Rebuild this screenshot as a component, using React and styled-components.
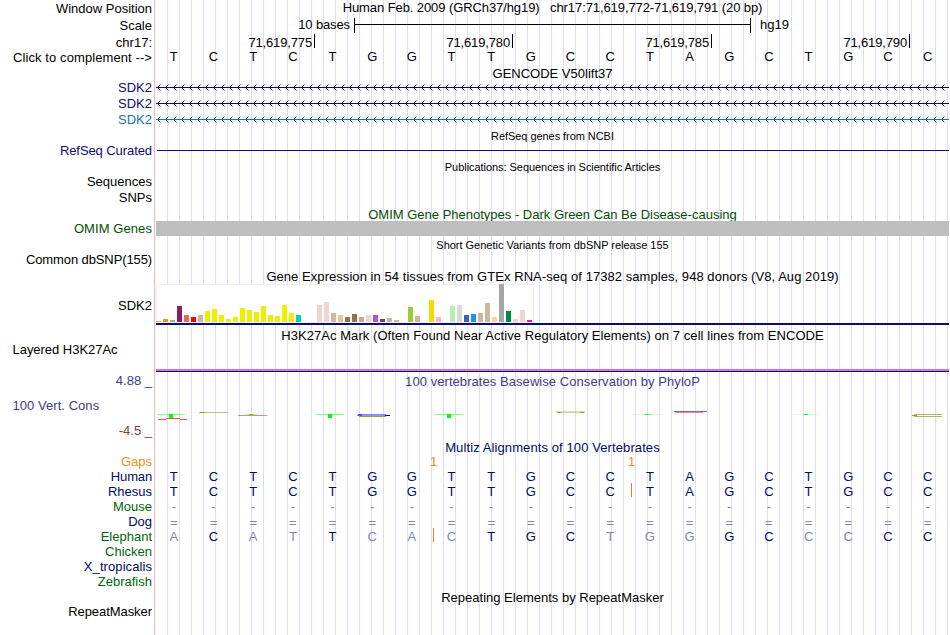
import React from 'react'
import styled, { createGlobalStyle } from 'styled-components'

const GlobalStyle = createGlobalStyle`
  body{
    margin:0;
    background:#fff;
    overflow:hidden;
  }
`
const Page = styled.div`
  width:949px;
  height:635px;
  overflow:hidden;
  font-family:"Liberation Sans", Arial, sans-serif;
  font-size:13px;
  line-height:15px;
  color:#000;
  background-color:#fff;
  background-image:
    linear-gradient(#ffb4b4, #ffb4b4),
    repeating-linear-gradient(90deg, #dcdcff 0, #dcdcff 1px, transparent 1px, transparent 12px);
  background-size:1px 100%, 782px 100%;
  background-position:154px 0, 167px 0;
  background-repeat:no-repeat;
`
const RowBox = styled.div`
  display:grid;
  grid-template-columns:152px 793px;
  column-gap:4px;
  height:${props => props.$h}px;
`
const Label = styled.div`
  padding-top:${props => props.$top || 0}px;
  padding-left:12.5px;
  text-align:${props => props.$left ? 'left' : 'right'};
  color:${props => props.$color || '#000'};
  letter-spacing:${props => props.$ls || 0}px;
  white-space:pre;
`
const Title = styled.div`
  padding-top:${props => props.$top || 0}px;
  height:${props => props.$clip ? '14px' : 'auto'};
  overflow:${props => props.$clip ? 'hidden' : 'visible'};
  text-align:center;
  white-space:pre;
  font-size:${props => props.$small ? 11 : 13}px;
  color:${props => props.$color || '#000'};
  letter-spacing:${props => props.$ls || 0}px;
`
const Scale = styled.div`
  display:flex;
`
const ScaleText = styled.span`
  width:${props => props.$w}px;
  text-align:right;
  margin-right:4px;
  letter-spacing:-0.12px;
`
const ScaleBar = styled.div`
  display:flex;
  align-items:center;
  width:395px;
  height:15px;
  margin-top:1px;
  margin-right:9px;
  border-left:1px solid #000;
  border-right:1px solid #000;
  &::before{
    content:'';
    flex:1;
    height:1px;
    margin-bottom:2px;
    background:#000;
  }
`
const Ruler = styled.div`
  display:flex;
`
const Tick = styled.div`
  box-sizing:border-box;
  width:${props => props.$w}px;
  height:14px;
  padding-top:1px;
  padding-right:2px;
  text-align:right;
  letter-spacing:-0.15px;
  border-right:1px solid #000;
`
const BaseRow = styled.div`
  position:relative;
  display:grid;
  grid-template-columns:repeat(20, 39.68px);
  padding-top:${props => props.$top || 0}px;
  text-align:center;
  color:${props => props.$color || '#000'};
`
const Base = styled.span`
  padding-right:4px;
  color:${props => props.$dim ? '#8286b4' : 'inherit'};
`
const Insert = styled.i`
  position:absolute;
  top:-1px;
  left:${props => props.$x}px;
  width:1px;
  height:14px;
  background:#e08a14;
`
const GapCount = styled.span`
  position:absolute;
  top:0;
  left:${props => props.$x}px;
  color:#ee8c10;
`
const Line = styled.div`
  height:1px;
  margin:7px 0 0 1px;
  background:#0c0c78;
`
const Block = styled.div`
  background:#bebebe;
`
const Expression = styled.div`
  border-bottom:2px solid #0c0c78;
  height:39px;
`
const BarBox = styled.div`
  box-sizing:border-box;
  display:flex;
  align-items:flex-end;
  gap:2px;
  width:378px;
  height:39px;
  background:#fff;
  box-shadow:inset 0 0 0 1px #f0f0f0;
  padding-bottom:1px;
`
const Bar = styled.i`
  width:5px;
  flex:none;
  background:${props => props.$color};
`
const Histone = styled.div`
  align-self:end;
  height:2px;
  background:#cc73fa;
  border-bottom:1px solid #2a0a4a;
`
const ConsLabels = styled.div`
  display:flex;
  flex-direction:column;
  justify-content:space-between;
  height:51px;
  padding-top:11px;
  box-sizing:border-box;
`
const Drawing = styled.svg`
  display:block;
`

const NAVY = '#0c0c78'
const ALIGN = '#000a64'
const GREEN = '#00640a'
const ORANGE = '#ee9018'
const CONS = '#3c3c8c'

const bars = [
  [1, '#ffa54f'], [3, '#ee9a00'], [2, '#8fbc8f'], [16, '#8b1c62'], [7, '#ee6a50'], [5, '#ff0000'], [7, '#cdb79e'],
  [11, '#eeee00'], [13, '#eeee00'], [7, '#eeee00'], [3, '#eeee00'], [5, '#eeee00'], [14, '#eeee00'], [12, '#eeee00'],
  [10, '#eeee00'], [16, '#eeee00'], [7, '#eeee00'], [6, '#eeee00'], [17, '#eeee00'], [9, '#eeee00'], [7, '#00cdcd'],
  [0, '#fff'], [0, '#fff'], [17, '#eed5d2'], [20, '#eed5d2'], [9, '#cdb79e'], [7, '#eec591'], [5, '#8b7355'],
  [8, '#8b7355'], [5, '#cdaa7d'], [7, '#eed5d2'], [7, '#b452cd'], [3, '#7a378b'], [4, '#cdb79e'], [2, '#cdb79e'],
  [0, '#fff'], [15, '#9acd32'], [6, '#cdb79e'], [0, '#fff'], [22, '#ffd700'], [5, '#ffb6c1'], [0, '#fff'],
  [16, '#b4eeb4'], [17, '#d9d9d9'], [7, '#3a5fcd'], [8, '#1e90ff'], [9, '#cdb79e'], [19, '#cdb79e'], [5, '#ffd39b'],
  [38, '#a6a6a6'], [11, '#008b45'], [3, '#eed5d2'], [12, '#eed5d2'], [2, '#ff00ff'],
]

// lower case letters are drawn dimmed
const Bases = ({ seq, color, dim, top, children }) => (
  <BaseRow $color={color} $top={top}>
    {seq.split('').map((b, i) => (
      <Base key={i} $dim={dim || b !== b.toUpperCase()}>{b.toUpperCase()}</Base>
    ))}
    {children}
  </BaseRow>
)

const Row = ({ h, label, top, color, left, ls, children }) => (
  <RowBox $h={h}>
    <Label $top={top} $color={color} $left={left} $ls={ls}>{label}</Label>
    {children}
  </RowBox>
)

const Intron = ({ id, color }) => (
  <Drawing width="793" height="16" shapeRendering="crispEdges">
    <defs>
      <pattern id={id} x="1" y="0" width="8" height="16" patternUnits="userSpaceOnUse">
        <g fill={color}>
          <rect x="0" y="7" width="1" height="1" />
          <rect x="1" y="6" width="1" height="1" />
          <rect x="1" y="8" width="1" height="1" />
          <rect x="2" y="5" width="1" height="1" />
          <rect x="2" y="9" width="1" height="1" />
          <rect x="3" y="4" width="1" height="1" opacity=".5" />
          <rect x="3" y="10" width="1" height="1" opacity=".5" />
        </g>
      </pattern>
    </defs>
    <rect x="0" y="7" width="793" height="1" fill={color} />
    <rect x="1" y="0" width="792" height="16" fill={`url(#${id})`} />
  </Drawing>
)

// origin of the drawing is x=156, y=387
const Conservation = () => (
  <Drawing width="793" height="53" viewBox="156 387 793 53" shapeRendering="crispEdges">
    <g fill="#80ff80">
      <rect x="157" y="414" width="28" height="1" />
      <rect x="316" y="414" width="28" height="1" />
      <rect x="435" y="414" width="28" height="1" />
      <rect x="633" y="414" width="28" height="1" opacity=".4" />
      <rect x="792" y="414" width="28" height="1" opacity=".25" />
    </g>
    <g fill="#00ff00">
      <rect x="169" y="414" width="4" height="4" />
      <rect x="249" y="414" width="4" height="1" />
      <rect x="328" y="414" width="4" height="4" />
      <rect x="447" y="414" width="4" height="4" />
      <rect x="645" y="414" width="4" height="1" />
      <rect x="804" y="414" width="4" height="1" />
    </g>
    <g fill="#ff5050">
      <rect x="166" y="418" width="14" height="1" />
      <rect x="158" y="419" width="8" height="1" />
      <rect x="180" y="419" width="7" height="1" />
      <rect x="238" y="415" width="29" height="1" opacity=".75" />
      <rect x="675" y="412" width="28" height="1" opacity=".7" />
    </g>
    <rect x="245" y="414" width="12" height="1" fill="#00ff00" opacity=".3" />
    <g fill="#a0a020">
      <rect x="199" y="412" width="29" height="1" opacity=".65" />
      <rect x="200" y="412" width="5" height="1" />
      <rect x="359" y="416" width="27" height="1" />
      <rect x="556" y="411" width="29" height="1" opacity=".35" />
      <rect x="557" y="412" width="28" height="1" opacity=".45" />
      <rect x="557" y="412" width="4" height="1" />
      <rect x="580" y="412" width="4" height="1" />
      <rect x="914" y="414" width="28" height="1" opacity=".75" />
      <rect x="912" y="415" width="5" height="1" />
      <rect x="914" y="416" width="28" height="1" opacity=".75" />
    </g>
    <g fill="#3030ff">
      <rect x="358" y="414" width="28" height="1" opacity=".6" />
      <rect x="357" y="415" width="28" height="1" opacity=".5" />
      <rect x="358" y="414" width="4" height="2" opacity=".7" />
      <rect x="674" y="411" width="33" height="1" opacity=".75" />
    </g>
    <rect x="385" y="415" width="5" height="1" fill="#0000c8" />
  </Drawing>
)

const human = 'TCTCTGGTTGCCTAGCTGCC'

const App = () => {
  return (
    <>
      <GlobalStyle />
      <Page>
        <Row h={17} label="Window Position" top={1}>
          <Title $ls={-0.09}>{'Human Feb. 2009 (GRCh37/hg19)   chr17:71,619,772-71,619,791 (20 bp)'}</Title>
        </Row>
        <Row h={17} label="Scale" top={1}>
          <Scale>
            <ScaleText $w={194}>10 bases</ScaleText>
            <ScaleBar />
            <span>hg19</span>
          </Scale>
        </Row>
        <Row h={15} label="chr17:" top={1}>
          <Ruler>
            <Tick $w={159}>71,619,775</Tick>
            <Tick $w={198}>71,619,780</Tick>
            <Tick $w={199}>71,619,785</Tick>
            <Tick $w={198}>71,619,790</Tick>
          </Ruler>
        </Row>
        <Row h={17} label="Click to complement -->" top={1} ls={0.09}>
          <Bases seq={human} />
        </Row>
        <Row h={14}>
          <Title>GENCODE V50lift37</Title>
        </Row>
        <Row h={16} label="SDK2" color={NAVY}><Intron id="a1" color={NAVY} /></Row>
        <Row h={16} label="SDK2" color={NAVY}><Intron id="a2" color={NAVY} /></Row>
        <Row h={16} label="SDK2" color="#1474b4"><Intron id="a3" color="#1474b4" /></Row>
        <Row h={15}><Title $small $top={1} $ls={-0.06}>RefSeq genes from NCBI</Title></Row>
        <Row h={16} label="RefSeq Curated" color={NAVY} ls={-0.08}><Line /></Row>
        <Row h={15}><Title $small $top={1} $ls={-0.05}>Publications: Sequences in Scientific Articles</Title></Row>
        <Row h={16} label="Sequences" />
        <Row h={16} label="SNPs" />
        <Row h={15}>
          <Title $clip $top={1} $color="#005000">OMIM Gene Phenotypes - Dark Green Can Be Disease-causing</Title>
        </Row>
        <Row h={15} label="OMIM Genes" color="#005000" ls={0.08}><Block /></Row>
        <Row h={16}><Title $small $top={2} $ls={-0.02}>Short Genetic Variants from dbSNP release 155</Title></Row>
        <Row h={17} label="Common dbSNP(155)" ls={-0.11} />
        <Row h={15}>
          <Title $ls={0.055}>Gene Expression in 54 tissues from GTEx RNA-seq of 17382 samples, 948 donors (V8, Aug 2019)</Title>
        </Row>
        <Row h={41} label="SDK2" top={14}>
          <Expression>
            <BarBox>
              {bars.map(([h, c], i) => <Bar key={i} $color={c} style={{ height: h }} />)}
            </BarBox>
          </Expression>
        </Row>
        <Row h={17}>
          <Title $top={3} $ls={0.058}>H3K27Ac Mark (Often Found Near Active Regulatory Elements) on 7 cell lines from ENCODE</Title>
        </Row>
        <Row h={30} label="Layered H3K27Ac" left ls={-0.03}><Histone /></Row>
        <Row h={15} label="4.88 _" top={1} color={CONS}>
          <Title $top={2} $color={CONS} $ls={0.06}>100 vertebrates Basewise Conservation by PhyloP</Title>
        </Row>
        <RowBox $h={53}>
          <ConsLabels>
            <Label $left $color={CONS} $ls={0.05}>100 Vert. Cons</Label>
            <Label $color="#8c3c3c">-4.5 _</Label>
          </ConsLabels>
          <Conservation />
        </RowBox>
        <Row h={14}><Title $color={ALIGN} $ls={0.1}>Multiz Alignments of 100 Vertebrates</Title></Row>
        <Row h={15} label="Gaps" color={ORANGE}>
          <BaseRow>
            <GapCount $x={274}>1</GapCount>
            <GapCount $x={472}>1</GapCount>
          </BaseRow>
        </Row>
        <Row h={15} label="Human" color={ALIGN} ls={-0.15}><Bases seq={human} color={ALIGN} /></Row>
        <Row h={15} label="Rhesus" color={ALIGN}>
          <Bases seq={human} color={ALIGN}><Insert $x={475} /></Bases>
        </Row>
        <Row h={15} label="Mouse" color={GREEN}><Bases seq={'-'.repeat(20)} dim /></Row>
        <Row h={15} label="Dog" color={ALIGN}><Bases seq={'='.repeat(20)} dim top={1} /></Row>
        <Row h={15} label="Elephant" color={GREEN}>
          <Bases seq="aCatTcacTGCtggGCccCC" color={ALIGN}><Insert $x={277} /></Bases>
        </Row>
        <Row h={15} label="Chicken" color={GREEN} />
        <Row h={15} label="X_tropicalis" color={ALIGN} ls={0.08} />
        <Row h={15} label="Zebrafish" color={GREEN} />
        <Row h={15}><Title $top={1}>Repeating Elements by RepeatMasker</Title></Row>
        <Row h={31} label="RepeatMasker" ls={-0.06} />
      </Page>
    </>
  )
}

export default App
